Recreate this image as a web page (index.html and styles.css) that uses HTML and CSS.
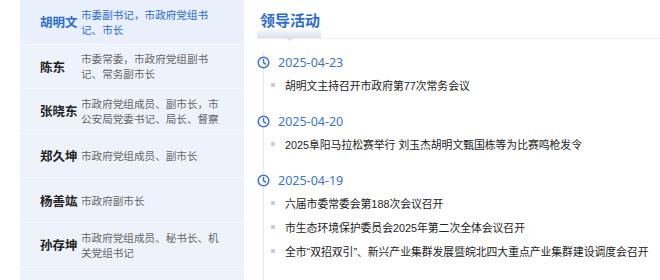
FILE: index.html
```html
<!DOCTYPE html>
<html lang="zh-CN">
<head>
<meta charset="utf-8">
<link rel="stylesheet" href="styles.css">
</head>
<body>
<div class="page">
  <aside class="leaders">
    <div class="row active"><span class="name">胡明文</span><span class="title">市委副书记，市政府党组书记、市长</span></div>
    <div class="row"><span class="name">陈东</span><span class="title">市委常委，市政府党组副书记、常务副市长</span></div>
    <div class="row"><span class="name">张晓东</span><span class="title">市政府党组成员、副市长，市公安局党委书记、局长、督察</span></div>
    <div class="row"><span class="name">郑久坤</span><span class="title">市政府党组成员、副市长</span></div>
    <div class="row"><span class="name">杨善竑</span><span class="title">市政府副市长</span></div>
    <div class="row"><span class="name">孙存坤</span><span class="title">市政府党组成员、秘书长、机关党组书记</span></div>
  </aside>
  <main class="main">
    <div class="head">
      <div class="tab">
        <div class="tab-text">领导活动</div>
        <div class="tab-bar"></div>
      </div>
    </div>
    <div class="timeline">
      <div class="group">
        <div class="date"><svg class="clock" viewBox="0 0 13 13"><circle cx="6.5" cy="6.5" r="5.3"/><path d="M6.5 3.6v3.1l2.1 1.4"/></svg><span>2025-04-23</span></div>
        <div class="item"><i class="dot"></i><span>胡明文主持召开市政府第77次常务会议</span></div>
      </div>
      <div class="group">
        <div class="date"><svg class="clock" viewBox="0 0 13 13"><circle cx="6.5" cy="6.5" r="5.3"/><path d="M6.5 3.6v3.1l2.1 1.4"/></svg><span>2025-04-20</span></div>
        <div class="item"><i class="dot"></i><span>2025阜阳马拉松赛举行 刘玉杰胡明文甄国栋等为比赛鸣枪发令</span></div>
      </div>
      <div class="group">
        <div class="date"><svg class="clock" viewBox="0 0 13 13"><circle cx="6.5" cy="6.5" r="5.3"/><path d="M6.5 3.6v3.1l2.1 1.4"/></svg><span>2025-04-19</span></div>
        <div class="item"><i class="dot"></i><span>六届市委常委会第188次会议召开</span></div>
        <div class="item"><i class="dot"></i><span>市生态环境保护委员会2025年第二次全体会议召开</span></div>
        <div class="item"><i class="dot"></i><span>全市“双招双引”、新兴产业集群发展暨皖北四大重点产业集群建设调度会召开</span></div>
      </div>
    </div>
  </main>
</div>
</body>
</html>
```
FILE: styles.css
```css
* { box-sizing: border-box; }
html, body { margin: 0; padding: 0; background: #fff; }
body {
  font-family: "Noto Sans CJK SC", "Noto Sans", sans-serif;
  width: 660px;
  height: 280px;
  overflow: hidden;
}
.page {
  display: flex;
  padding-left: 20px;
  height: 280px;
}
.leaders {
  width: 224px;
  flex: 0 0 224px;
  background: #eef3fb;
  height: 280px;
}
.row {
  display: flex;
  align-items: center;
  height: 44.6px;
  padding-left: 20px;
  border-bottom: 1px solid #f6f8fd;
}
.row.active { background: #e9f0fc; }
.name {
  flex: 0 0 41px;
  font-size: 12.5px;
  font-weight: 700;
  color: #222;
  white-space: nowrap;
}
.title {
  width: 143px;
  font-size: 10.6px;
  line-height: 15px;
  color: #666;
}
.row.active .name, .row.active .title { color: #2b6bd4; }

.main {
  flex: 1;
  padding-left: 13px;
  min-width: 0;
}
.head {
  display: flex;
  border-bottom: 1px solid #edf0f4;
}
.tab {
  width: 64px;
  display: flex;
  flex-direction: column;
}
.tab-text {
  padding-top: 10px;
  padding-left: 3px;
  font-size: 15px;
  line-height: 20px;
  font-weight: 700;
  color: #2b6bd4;
  white-space: nowrap;
}
.tab-bar {
  position: relative;
  height: 8px;
  background: linear-gradient(#f5f7fb, #d9e0ea);
}
.tab-bar::after {
  content: "";
  position: absolute;
  left: 29px;
  bottom: -3px;
  border-left: 4px solid transparent;
  border-right: 4px solid transparent;
  border-top: 3px solid #d9e0ea;
}
.timeline {
  margin-left: 6px;
  margin-top: 13px;
  border-left: 1px solid #e3e8f0;
  height: 240px;
}
.group { margin-bottom: 14px; }
.date {
  display: flex;
  align-items: center;
  height: 21px;
  font-family: "Noto Sans", sans-serif;
  font-size: 12.5px;
  color: #3a74d3;
}
.clock {
  width: 13px;
  height: 13px;
  margin-left: -7px;
  margin-right: 8px;
  background: #fff;
  fill: none;
  stroke: #3a74d3;
  stroke-width: 1.5;
  stroke-linecap: round;
  stroke-linejoin: round;
}
.item {
  display: flex;
  align-items: center;
  height: 24px;
  font-family: "Liberation Sans", "Noto Sans CJK SC", sans-serif;
  font-size: 10.8px;
  color: #222;
  white-space: nowrap;
}
.dot {
  width: 4px;
  height: 4px;
  margin-left: 7px;
  margin-right: 10px;
  background: #c6ccd6;
  border-radius: 1px;
  flex: 0 0 4px;
}
```
